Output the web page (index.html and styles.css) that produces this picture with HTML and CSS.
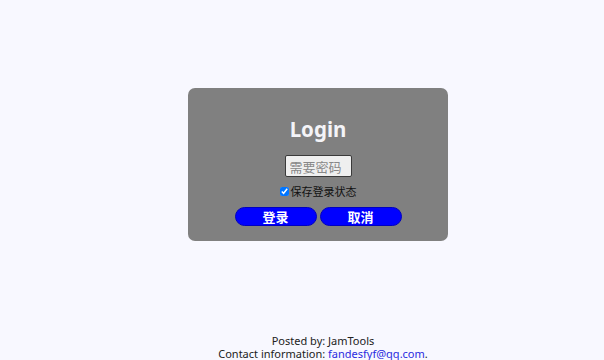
FILE: index.html
```html
<!DOCTYPE html>
<html lang="zh">
<head>
<meta charset="utf-8">
<title>Login</title>
<link rel="stylesheet" href="styles.css">
</head>
<body>
<div class="page">
  <div class="card">
    <h1 class="title">Login</h1>
    <input class="pwd" type="password" placeholder="需要密码">
    <label class="remember"><input class="check" type="checkbox" checked>保存登录状态</label>
    <div class="buttons">
      <button class="btn">登录</button>
      <button class="btn">取消</button>
    </div>
  </div>
  <footer class="footer">
    <div>Posted by: JamTools</div>
    <div>Contact information: <a class="mail" href="#">fandesfyf@qq.com</a>.</div>
  </footer>
</div>
</body>
</html>
```
FILE: styles.css
```css
html, body {
  margin: 0;
  padding: 0;
  background: #f8f8ff;
  font-family: "Noto Sans", "Noto Sans CJK SC", sans-serif;
}
.page {
  display: flex;
  flex-direction: column;
  align-items: center;
  padding-top: 88px;
  padding-left: 32px;
  height: 360px;
  box-sizing: border-box;
}
.card {
  width: 260px;
  box-sizing: border-box;
  background: #808080;
  border-radius: 7px;
  padding: 28px 0 15px;
  display: flex;
  flex-direction: column;
  align-items: center;
}
.title {
  margin: 0;
  font-size: 20.5px;
  line-height: 26px;
  font-weight: 700;
  color: #f4f4f8;
}
.pwd {
  margin-top: 13px;
  width: 67px;
  height: 22px;
  box-sizing: border-box;
  background: #efefef;
  border: 1px solid #3a3a3a;
  border-radius: 2px;
  padding: 0 4px;
  font-family: "Noto Sans CJK SC", sans-serif;
  font-size: 13px;
}
.pwd::placeholder {
  color: #888;
}
.remember {
  margin-top: 8px;
  display: flex;
  align-items: center;
  font-family: "Noto Sans CJK SC", sans-serif;
  font-size: 11px;
  line-height: 12px;
  color: #111;
}
.check {
  width: 9px;
  height: 9px;
  margin: 0 2px 0 0;
}
.buttons {
  margin-top: 10px;
  display: flex;
  gap: 3px;
}
.btn {
  width: 82px;
  height: 19px;
  border: 1px solid #0000c0;
  border-radius: 10px;
  background: #0000ff;
  color: #fff;
  font-family: "Noto Sans CJK SC", sans-serif;
  font-weight: 700;
  font-size: 13px;
  line-height: 17px;
  padding: 0;
}
.footer {
  margin-top: auto;
  padding-left: 10px;
  font-size: 11px;
  line-height: 13px;
  color: #222;
  text-align: center;
  padding-bottom: 0;
  margin-bottom: 0;
}
.mail {
  color: #2a2ae0;
  text-decoration: none;
}
```
